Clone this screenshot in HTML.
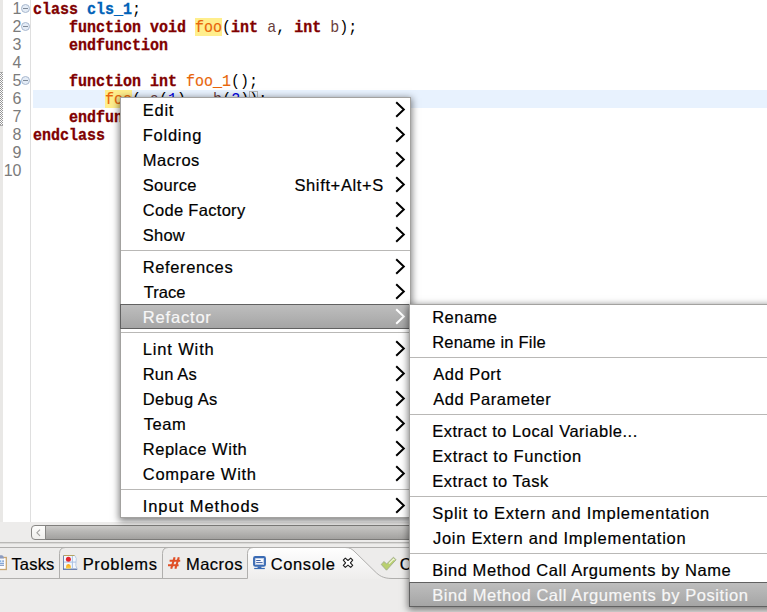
<!DOCTYPE html>
<html>
<head>
<meta charset="utf-8">
<title>Refactor menu</title>
<style>
*{box-sizing:border-box;margin:0;padding:0}
html,body{width:767px;height:612px;overflow:hidden;background:#fff}
body{position:relative;font-family:"Liberation Sans",sans-serif;color:#000}
.abs{position:absolute}
/* editor */
#leftstrip{left:0;top:0;width:3px;height:522px;background:#e9e8e6}
#dots{left:0;top:72px;width:3px;height:54px;background-color:#fff;background-image:repeating-conic-gradient(#979797 0 25%,#fdfdfd 0 50%);background-size:2px 2px;border-top:1px solid #a9a9a9;border-bottom:1px solid #a9a9a9}
#gutterline{left:30px;top:0;width:1px;height:522px;background:#dfdfdf}
#curline{left:33px;top:90px;width:734px;height:18px;background:#e8f2fe}
.ln{position:absolute;left:0.5px;width:21px;text-align:right;font-family:"Liberation Sans",sans-serif;font-size:16px;line-height:18px;height:18px;color:#7b7b7b;margin-top:0}
.code{transform:scaleY(1.13);transform-origin:0 12px;position:absolute;left:33px;font-family:"Liberation Mono",monospace;font-size:15px;line-height:18px;height:18px;white-space:pre;color:#000}
.k{color:#800000;font-weight:bold;-webkit-text-stroke:.3px #800000}
.c{color:#0062b8;font-weight:bold;-webkit-text-stroke:.3px #0062b8}
.f{color:#e8650a;-webkit-text-stroke:.15px #e8650a}
.p{color:#6a3e3e}
.n{color:#0000e0}
.hl{background:#ffee8c}
.fold{position:absolute;left:21px;width:9px;height:9px;border-radius:50%;border:1px solid #a9b9cf;background:#e4ecf6}
.fold:after{content:"";position:absolute;left:1px;top:3px;width:5px;height:1px;background:#808b99}
/* bottom */
#hscrollbg{left:0;top:522px;width:767px;height:20px;background:#edeceb}
#hsbtn{left:31px;top:525px;width:15px;height:15px;border:1px solid #878684;border-radius:4px 0 0 4px;background:linear-gradient(#fdfdfc,#efeeec)}
#hsthumb{left:45px;top:525px;width:722px;height:15px;border-top:1px solid #7f7e7c;border-bottom:1px solid #7b7a78;border-left:1px solid #878684;background:linear-gradient(#cccbc9,#b7b6b4 45%,#a2a19f)}
#bottom{left:0;top:542px;width:767px;height:70px;background:#edeceb}
.tab{-webkit-text-stroke:.2px #000;position:absolute;top:553px;font-size:16.5px;line-height:22px;height:22px;white-space:pre;color:#000}
/* menus */
.menu{position:absolute;background:#fff;box-shadow:0 0 0 1px #a3a2a0 inset,0 2px 7px 1px rgba(0,0,0,.5);overflow:visible}
.mi{position:absolute;left:0;right:0;height:25px;line-height:25px;font-size:16.5px;white-space:pre;-webkit-text-stroke:.2px currentColor}
.mi span.t{position:absolute;left:22.5px;top:1px}
.mi span.a{position:absolute;right:27px;top:1px}
.mi svg.ar{position:absolute;right:5px;top:4px}
#m2 .mi span.t{left:23px}
.sep{position:absolute;left:1px;right:1px;height:1px;background:#b9b8b6}
.sel{background:linear-gradient(#bfbfbf,#a4a4a4);color:#f7f7f7;box-shadow:0 0 0 1px #616161 inset}
</style>
</head>
<body>
<!-- EDITOR -->
<div class="abs" id="curline"></div>
<div class="abs hl" style="left:195px;top:18px;width:27px;height:18px"></div>
<div class="abs hl" style="left:105px;top:90px;width:27px;height:18px"></div>
<div class="abs" style="left:249px;top:91px;width:9px;height:16px;border:1px solid #b4b4b4"></div>
<div class="abs" id="leftstrip"></div>
<div class="abs" id="dots"></div>
<div class="abs" id="gutterline"></div>

<div class="ln" style="top:0">1</div>
<div class="ln" style="top:18px">2</div>
<div class="ln" style="top:36px">3</div>
<div class="ln" style="top:54px">4</div>
<div class="ln" style="top:72px">5</div>
<div class="ln" style="top:90px">6</div>
<div class="ln" style="top:108px">7</div>
<div class="ln" style="top:126px">8</div>
<div class="ln" style="top:144px">9</div>
<div class="ln" style="top:162px">10</div>
<div class="fold" style="top:4px"></div>
<div class="fold" style="top:22px"></div>
<div class="fold" style="top:76px"></div>

<div class="code" style="top:2px"><span class="k">class</span> <span class="c">cls_1</span>;</div>
<div class="code" style="top:20px">    <span class="k">function</span> <span class="k">void</span> <span class="f">foo</span>(<span class="k">int</span> <span class="p">a</span>, <span class="k">int</span> <span class="p">b</span>);</div>
<div class="code" style="top:38px">    <span class="k">endfunction</span></div>
<div class="code" style="top:74px">    <span class="k">function</span> <span class="k">int</span> <span class="f">foo_1</span>();</div>
<div class="code" style="top:92px">        <span class="f">foo</span>(.<span class="p">a</span>(<span class="n">1</span>), .<span class="p">b</span>(<span class="n">2</span>));</div>
<div class="code" style="top:110px">    <span class="k">endfunction</span></div>
<div class="code" style="top:128px"><span class="k">endclass</span></div>

<!-- BOTTOM -->
<div class="abs" id="hscrollbg"></div>
<div class="abs" id="hsthumb"></div>
<div class="abs" id="hsbtn"><svg width="14" height="15" viewBox="0 0 14 15" style="position:absolute;left:0;top:0"><path d="M8 3.6 L4.9 6.7 L8 9.8" fill="none" stroke="#a3a2a0" stroke-width="1.1"/></svg></div>
<div class="abs" id="bottom"></div>
<svg class="abs" id="tabs" style="left:0;top:540px" width="767" height="72" viewBox="0 540 767 72">
  <defs>
    <linearGradient id="gact" x1="0" y1="547" x2="0" y2="579" gradientUnits="userSpaceOnUse">
      <stop offset="0" stop-color="#ffffff"/><stop offset="1" stop-color="#eeedec"/>
    </linearGradient>
    <linearGradient id="gbell" x1="0" y1="564" x2="0" y2="569" gradientUnits="userSpaceOnUse">
      <stop offset="0" stop-color="#f6a21a"/><stop offset="1" stop-color="#ffd84a"/>
    </linearGradient>
  </defs>
  <rect x="0" y="542" width="767" height="1" fill="#b9b8b6"/>
  <rect x="0" y="543" width="767" height="1" fill="#dad9d7"/>
  <!-- active tab fill -->
  <path d="M247.5 579 L247.5 553.5 Q247.5 547.5 253.5 547.5 L345 547.5 C350 547.5 352 549 355 552 L375 571.5 C379 575.5 383 578.5 392 578.5 L392 579 Z" fill="url(#gact)"/>
  <!-- tab outlines -->
  <g fill="none" stroke="#b0afad" stroke-width="1">
    <path d="M0 547.5 L767 547.5"/>
    <path d="M59.5 578.5 L59.5 553.5 Q59.5 547.5 65.5 547.5"/>
    <path d="M162.5 578.5 L162.5 553.5 Q162.5 547.5 168.5 547.5"/>
    <path d="M0 578.5 L247.5 578.5 L247.5 553.5 Q247.5 547.5 253.5 547.5"/>
    <path d="M345 547.5 C350 547.5 352 549 355 552 L375 571.5 C379 575.5 383 578.5 392 578.5 L767 578.5"/>
  </g>
  <!-- tasks icon (clipped at left) -->
  <g>
    <rect x="-6" y="557.5" width="12.3" height="12" fill="#fdfdff" stroke="#c9a671" stroke-width="1.3"/>
    <path d="M-2 558.5 L-2 556.5 Q-2 555.3 0 555.3 L1.8 555.3 Q3.2 555.3 3.6 556.8 L4 558.5 Z" fill="#8d9cc0"/>
    <rect x="-1" y="559.6" width="5" height="5.6" fill="#e8f0fb"/>
    <rect x="0" y="560.6" width="1.2" height="1" fill="#3f8ddb"/>
    <rect x="2.2" y="560.6" width="1.8" height="1" fill="#5a7fb8"/>
    <rect x="0" y="562.8" width="4" height="1" fill="#6d95cf"/>
    <rect x="0" y="564.8" width="4" height="1" fill="#7b8fb8"/>
  </g>
  <!-- problems icon -->
  <g>
    <path d="M63.5 555.5 L74.8 555.5 Q77.3 558.5 76 562 Q75 565.5 77.2 569.2 L63.5 569.2 Z" fill="#f4f8fd"/>
    <path d="M63.5 555.5 L74.8 555.5" stroke="#b4a562" stroke-width="1" fill="none"/>
    <path d="M63.5 555.5 L63.5 569.2" stroke="#7186b4" stroke-width="1" fill="none"/>
    <path d="M63 569.2 L77.2 569.2" stroke="#4f689f" stroke-width="1.2" fill="none"/>
    <path d="M74.8 555.5 Q77.3 558.5 76 562 Q75 565.5 77.2 569.2" stroke="#b9cbe6" stroke-width="1" fill="none"/>
    <path d="M64 562.1 L76 562.1 M72.4 556 L72.4 569" stroke="#a9c0e2" stroke-width="1" fill="none"/>
    <circle cx="68.4" cy="559.2" r="2.5" fill="#e3262f"/>
    <path d="M66 568.6 L66 566.4 Q66 564.2 68.4 564 Q70.8 564.2 70.8 566.4 L70.8 568.6 Z" fill="url(#gbell)"/>
  </g>
  <!-- macros hash -->
  <g stroke="#e04f27" stroke-width="2.1" fill="none">
    <path d="M169.6 560.8 L180.2 560.8 M168 565.2 L178.6 565.2"/>
    <path d="M174.6 557.2 L171.2 568.8 M178.8 557.2 L175.4 568.8"/>
  </g>
  <!-- console icon -->
  <g>
    <rect x="254" y="557" width="11" height="8.8" rx="1.3" fill="#fafcff" stroke="#3a6bb4" stroke-width="1.9"/>
    <rect x="255.4" y="558.4" width="8.2" height="6" fill="none" stroke="#9fb2d3" stroke-width=".6"/>
    <rect x="256.2" y="560" width="4.4" height="1" fill="#3f5fa3"/>
    <rect x="256.2" y="562.1" width="6.4" height="1" fill="#3f5fa3"/>
    <rect x="257.6" y="566.4" width="3.8" height="1.6" fill="#3a6bb4"/>
    <rect x="254.2" y="567.9" width="10.6" height="1.2" fill="#3a6bb4"/>
  </g>
  <!-- close X -->
  <path d="M343.3 560.2 L345.3 558.2 L348 560.5 L350.7 558.2 L352.7 560.2 L350.4 562.8 L352.7 565.4 L350.7 567.4 L348 565.1 L345.3 567.4 L343.3 565.4 L345.6 562.8 Z" fill="#ffffff" stroke="#1c1c1c" stroke-width="1.1" stroke-linejoin="round"/>
  <!-- check icon -->
  <g>
    <path d="M381.2 564.4 L384.1 561.5 L386.6 564 L393.5 557.2 L396 559.8 L386.5 570.2 Z" fill="#b9d06f" stroke="#a0ac8e" stroke-width=".9" stroke-linejoin="round"/>
    <path d="M389 563.6 L393.5 559.1 L394.5 560.1" stroke="#f1f6dc" stroke-width="1.3" fill="none"/>
  </g>
</svg>
<div class="tab" id="t1" style="left:11.4px;letter-spacing:.2px">Tasks</div>
<div class="tab" id="t2" style="left:82.7px;letter-spacing:.65px">Problems</div>
<div class="tab" id="t3" style="left:185.9px;letter-spacing:.5px">Macros</div>
<div class="tab" id="t4" style="left:270.8px;letter-spacing:.6px">Console</div>
<div class="tab" id="t5" style="left:399.8px">C</div>

<!-- MENU 1 -->
<div class="menu" id="m1" style="left:120px;top:97px;width:291px;height:421px">
  <div class="mi" style="top:0px"><span class="t" style="letter-spacing:0.752px;margin-left:0.22px">Edit</span><svg class="ar" width="11" height="17" viewBox="0 0 11 17"><path d="M1.2 1.3 L8.8 8.5 L1.2 15.7" fill="none" stroke="#000" stroke-width="2"/></svg></div>
  <div class="mi" style="top:25px"><span class="t" style="letter-spacing:0.759px;margin-left:0.22px">Folding</span><svg class="ar" width="11" height="17" viewBox="0 0 11 17"><path d="M1.2 1.3 L8.8 8.5 L1.2 15.7" fill="none" stroke="#000" stroke-width="2"/></svg></div>
  <div class="mi" style="top:50px"><span class="t" style="letter-spacing:0.511px;margin-left:0.22px">Macros</span><svg class="ar" width="11" height="17" viewBox="0 0 11 17"><path d="M1.2 1.3 L8.8 8.5 L1.2 15.7" fill="none" stroke="#000" stroke-width="2"/></svg></div>
  <div class="mi" style="top:75px"><span class="t" style="letter-spacing:0.271px;margin-left:0.25px">Source</span><span class="a" style="letter-spacing:0.64px">Shift+Alt+S</span><svg class="ar" width="11" height="17" viewBox="0 0 11 17"><path d="M1.2 1.3 L8.8 8.5 L1.2 15.7" fill="none" stroke="#000" stroke-width="2"/></svg></div>
  <div class="mi" style="top:100px"><span class="t" style="letter-spacing:0.299px;margin-left:0.34px">Code Factory</span><svg class="ar" width="11" height="17" viewBox="0 0 11 17"><path d="M1.2 1.3 L8.8 8.5 L1.2 15.7" fill="none" stroke="#000" stroke-width="2"/></svg></div>
  <div class="mi" style="top:125px"><span class="t" style="letter-spacing:0.251px;margin-left:0.25px">Show</span><svg class="ar" width="11" height="17" viewBox="0 0 11 17"><path d="M1.2 1.3 L8.8 8.5 L1.2 15.7" fill="none" stroke="#000" stroke-width="2"/></svg></div>
  <div class="mi" style="top:157px"><span class="t" style="letter-spacing:0.617px;margin-left:0.22px">References</span><svg class="ar" width="11" height="17" viewBox="0 0 11 17"><path d="M1.2 1.3 L8.8 8.5 L1.2 15.7" fill="none" stroke="#000" stroke-width="2"/></svg></div>
  <div class="mi" style="top:182px"><span class="t" style="letter-spacing:0.039px;margin-left:1.21px">Trace</span><svg class="ar" width="11" height="17" viewBox="0 0 11 17"><path d="M1.2 1.3 L8.8 8.5 L1.2 15.7" fill="none" stroke="#000" stroke-width="2"/></svg></div>
  <div class="mi sel" style="top:207px"><span class="t" style="letter-spacing:0.808px;margin-left:0.35px">Refactor</span><svg class="ar" width="11" height="17" viewBox="0 0 11 17"><path d="M1.2 1.3 L8.8 8.5 L1.2 15.7" fill="none" stroke="#ffffff" stroke-width="2"/></svg></div>
  <div class="mi" style="top:239px"><span class="t" style="letter-spacing:0.857px;margin-left:0.22px">Lint With</span><svg class="ar" width="11" height="17" viewBox="0 0 11 17"><path d="M1.2 1.3 L8.8 8.5 L1.2 15.7" fill="none" stroke="#000" stroke-width="2"/></svg></div>
  <div class="mi" style="top:264px"><span class="t" style="letter-spacing:0.171px;margin-left:0.22px">Run As</span><svg class="ar" width="11" height="17" viewBox="0 0 11 17"><path d="M1.2 1.3 L8.8 8.5 L1.2 15.7" fill="none" stroke="#000" stroke-width="2"/></svg></div>
  <div class="mi" style="top:289px"><span class="t" style="letter-spacing:0.437px;margin-left:0.22px">Debug As</span><svg class="ar" width="11" height="17" viewBox="0 0 11 17"><path d="M1.2 1.3 L8.8 8.5 L1.2 15.7" fill="none" stroke="#000" stroke-width="2"/></svg></div>
  <div class="mi" style="top:314px"><span class="t" style="letter-spacing:0.586px;margin-left:1.21px">Team</span><svg class="ar" width="11" height="17" viewBox="0 0 11 17"><path d="M1.2 1.3 L8.8 8.5 L1.2 15.7" fill="none" stroke="#000" stroke-width="2"/></svg></div>
  <div class="mi" style="top:339px"><span class="t" style="letter-spacing:0.532px;margin-left:0.22px">Replace With</span><svg class="ar" width="11" height="17" viewBox="0 0 11 17"><path d="M1.2 1.3 L8.8 8.5 L1.2 15.7" fill="none" stroke="#000" stroke-width="2"/></svg></div>
  <div class="mi" style="top:364px"><span class="t" style="letter-spacing:0.699px;margin-left:0.34px">Compare With</span><svg class="ar" width="11" height="17" viewBox="0 0 11 17"><path d="M1.2 1.3 L8.8 8.5 L1.2 15.7" fill="none" stroke="#000" stroke-width="2"/></svg></div>
  <div class="mi" style="top:396px"><span class="t" style="letter-spacing:0.97px;margin-left:0.16px">Input Methods</span><svg class="ar" width="11" height="17" viewBox="0 0 11 17"><path d="M1.2 1.3 L8.8 8.5 L1.2 15.7" fill="none" stroke="#000" stroke-width="2"/></svg></div>
  <div class="sep" style="top:153px"></div>
  <div class="sep" style="top:235px"></div>
  <div class="sep" style="top:392px"></div>
</div>

<!-- MENU 2 -->
<div class="menu" id="m2" style="left:409px;top:304px;width:370px;height:303px">
  <div class="mi" style="top:0px"><span class="t" style="letter-spacing:0.493px;margin-left:0.17px">Rename</span></div>
  <div class="mi" style="top:25px"><span class="t" style="letter-spacing:0.197px;margin-left:0.17px">Rename in File</span></div>
  <div class="mi" style="top:57px"><span class="t" style="letter-spacing:0.479px;margin-left:1.3px">Add Port</span></div>
  <div class="mi" style="top:82px"><span class="t" style="letter-spacing:0.546px;margin-left:1.3px">Add Parameter</span></div>
  <div class="mi" style="top:114px"><span class="t" style="letter-spacing:0.51px;margin-left:0.17px">Extract to Local Variable...</span></div>
  <div class="mi" style="top:139px"><span class="t" style="letter-spacing:0.637px;margin-left:0.17px">Extract to Function</span></div>
  <div class="mi" style="top:164px"><span class="t" style="letter-spacing:0.583px;margin-left:0.17px">Extract to Task</span></div>
  <div class="mi" style="top:196px"><span class="t" style="letter-spacing:0.753px;margin-left:0.2px">Split to Extern and Implementation</span></div>
  <div class="mi" style="top:221px"><span class="t" style="letter-spacing:0.708px;margin-left:1.03px">Join Extern and Implementation</span></div>
  <div class="mi" style="top:253px"><span class="t" style="letter-spacing:0.569px;margin-left:0.17px">Bind Method Call Arguments by Name</span></div>
  <div class="mi sel" style="top:278px"><span class="t" style="letter-spacing:0.573px;margin-left:0.29px">Bind Method Call Arguments by Position</span></div>
  <div class="sep" style="top:53px"></div>
  <div class="sep" style="top:110px"></div>
  <div class="sep" style="top:192px"></div>
  <div class="sep" style="top:249px"></div>
</div>
</body>
</html>
